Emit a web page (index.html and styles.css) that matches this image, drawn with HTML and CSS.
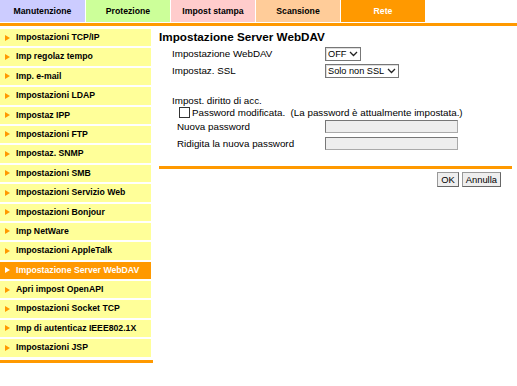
FILE: index.html
```html
<!DOCTYPE html>
<html lang="it">

<head>
    <meta charset="UTF-8">
    <title>Impostazione Server WebDAV</title>
    <link rel="stylesheet" href="styles.css">
</head>

<body>
    <div class="tabs">
        <div class="tab tab-manut">Manutenzione</div>
        <div class="tab tab-prot">Protezione</div>
        <div class="tab tab-stampa">Impost stampa</div>
        <div class="tab tab-scan">Scansione</div>
        <div class="tab tab-rete">Rete</div>
    </div>
    <div class="tab-bar"></div>

    <div class="page">
        <div class="sidebar">
            <ul class="menu">
                <li>Impostazioni TCP/IP</li>
                <li>Imp regolaz tempo</li>
                <li>Imp. e-mail</li>
                <li>Impostazioni LDAP</li>
                <li>Impostaz IPP</li>
                <li>Impostazioni FTP</li>
                <li>Impostaz. SNMP</li>
                <li>Impostazioni SMB</li>
                <li>Impostazioni Servizio Web</li>
                <li>Impostazioni Bonjour</li>
                <li>Imp NetWare</li>
                <li>Impostazioni AppleTalk</li>
                <li class="active">Impostazione Server WebDAV</li>
                <li>Apri impost OpenAPI</li>
                <li>Impostazioni Socket TCP</li>
                <li>Imp di autenticaz IEEE802.1X</li>
                <li>Impostazioni JSP</li>
            </ul>
            <div class="menu-bar"></div>
        </div>

        <div class="content">
            <h1>Impostazione Server WebDAV</h1>

            <div class="row">
                <span class="label">Impostazione WebDAV</span>
                <span class="select">OFF
                    <svg width="9" height="6" viewBox="0 0 9 6"><path d="M1 1 L4.5 4.5 L8 1" fill="none" stroke="#222" stroke-width="1.3"/></svg>
                </span>
            </div>
            <div class="row">
                <span class="label">Impostaz. SSL</span>
                <span class="select">Solo non SSL
                    <svg width="9" height="6" viewBox="0 0 9 6"><path d="M1 1 L4.5 4.5 L8 1" fill="none" stroke="#222" stroke-width="1.3"/></svg>
                </span>
            </div>

            <div class="group-title">Impost. diritto di acc.</div>
            <div class="check-row">
                <span class="checkbox"></span>
                <span>Password modificata.&nbsp; (La password è attualmente impostata.)</span>
            </div>
            <div class="row pw-row">
                <span class="label">Nuova password</span>
                <input class="pw" type="password" disabled>
            </div>
            <div class="row pw-row">
                <span class="label">Ridigita la nuova password</span>
                <input class="pw" type="password" disabled>
            </div>

            <div class="content-bar"></div>

            <div class="buttons">
                <button>OK</button>
                <button>Annulla</button>
            </div>
        </div>
    </div>
</body>

</html>
```

FILE: styles.css
```css
body {
    margin: 0;
    width: 517px;
    font-family: "Liberation Sans", Arial, sans-serif;
    color: #000;
    background: #fff;
}

/* schede in alto */
.tabs {
    display: flex;
    gap: 1px;
    height: 22px;
}

.tab {
    width: 84px;
    line-height: 22px;
    text-align: center;
    font-size: 8.7px;
    font-weight: bold;
}

.tab-manut {
    width: 85px;
    background-color: #ccccff;
}

.tab-prot {
    background-color: #ccff99;
}

.tab-stampa {
    background-color: #ffcccc;
}

.tab-scan {
    background-color: #ffcc99;
}

.tab-rete {
    background-color: #ff9900;
    color: #fff;
}

.tab-bar {
    margin-top: 1px;
    height: 3px;
    background-color: #ff9900;
}

.page {
    display: flex;
}

/* menu laterale */
.sidebar {
    width: 153px;
    padding-top: 3px;
}

.menu {
    list-style: none;
    margin: 0;
    padding: 0;
    width: 151px;
}

.menu li {
    position: relative;
    height: 17.4px;
    line-height: 17.4px;
    margin-bottom: 2px;
    padding-left: 16px;
    background-color: #ffff99;
    font-size: 8.7px;
    font-weight: bold;
    white-space: nowrap;
}

.menu li::before {
    content: "";
    position: absolute;
    left: 5px;
    top: 5.5px;
    border-left: 5px solid #ff9900;
    border-top: 3.5px solid transparent;
    border-bottom: 3.5px solid transparent;
}

.menu li.active {
    background-color: #ff9900;
    color: #fff;
}

.menu li.active::before {
    border-left-color: #fff;
}

.menu-bar {
    margin-top: 3px;
    height: 3px;
    background-color: #ff9900;
}

/* contenuto */
.content {
    width: 353px;
    margin-left: 6px;
    padding-top: 4px;
    font-size: 9.8px;
}

h1 {
    margin: 0;
    font-size: 11.7px;
    line-height: 14px;
    height: 15px;
}

.row {
    display: flex;
    align-items: center;
    height: 17px;
    padding-left: 13px;
}

.label {
    width: 153px;
}

.select {
    display: inline-flex;
    align-items: center;
    gap: 3px;
    height: 12px;
    padding: 0 2px;
    border: 1px solid #777;
    box-shadow: inset 1px 1px 0 #ddd;
    background: #fff;
    font-size: 9.2px;
}

.group-title {
    margin-top: 16px;
    padding-left: 13px;
    line-height: 12px;
}

.check-row {
    display: flex;
    align-items: center;
    gap: 2px;
    height: 11px;
    padding-left: 20px;
}

.checkbox {
    width: 9px;
    height: 9px;
    border: 1px solid #333;
    background: #fff;
}

.pw-row {
    padding-left: 18px;
}

.pw-row .label {
    width: 148px;
}

.pw {
    width: 131px;
    height: 11px;
    margin: 0;
    padding: 0;
    border: 1px solid #aaa;
    border-top-color: #777;
    border-left-color: #777;
    background-color: #eee;
}

.content-bar {
    margin-top: 14px;
    height: 3px;
    background-color: #ff9900;
}

.buttons {
    display: flex;
    justify-content: flex-end;
    gap: 3px;
    margin-top: 3px;
    padding-right: 11px;
}

button {
    height: 15px;
    padding: 0 3px;
    font-family: "Liberation Sans", Arial, sans-serif;
    font-size: 9.4px;
    background-color: #eee;
    border: 1px solid #999;
    border-right-color: #666;
    border-bottom-color: #666;
}
```
